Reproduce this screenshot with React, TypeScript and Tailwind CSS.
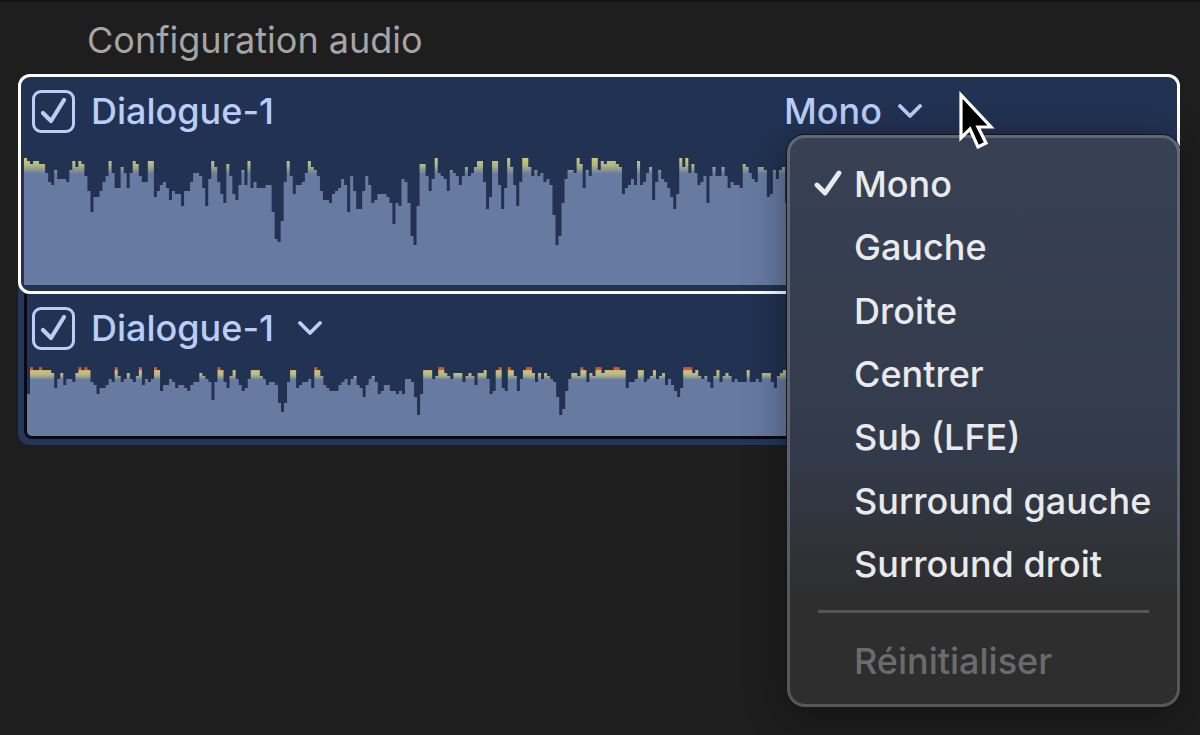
import { useId, useState } from 'react';

const STEP = 3;

// Distance of each column from the top of the lane, in steps of 3 units.
const MAIN_LEVELS = [
  0, 1, 2, 1, 1, 2, 2, 5, 8, 9, 4, 7, 7, 7, 8, 4, 1, 3, 1, 2, 6, 11, 18, 13,
  13, 11, 8, 6, 1, 5, 10, 10, 3, 5, 10, 5, 1, 2, 6, 8, 8, 1, 1, 13, 11, 9, 8,
  10, 14, 11, 12, 12, 16, 11, 11, 8, 5, 5, 6, 10, 16, 7, 1, 3, 8, 12, 15, 2, 6,
  12, 14, 9, 4, 9, 1, 10, 8, 10, 10, 10, 9, 9, 18, 27, 28, 21, 8, 1, 6, 12, 9,
  9, 8, 5, 1, 3, 4, 6, 11, 14, 14, 15, 12, 11, 10, 7, 9, 18, 6, 11, 17, 17, 11,
  6, 9, 15, 14, 12, 12, 12, 13, 15, 22, 15, 16, 7, 8, 15, 26, 29, 16, 2, 2, 6,
  11, 7, 0, 5, 6, 7, 11, 4, 5, 6, 9, 6, 3, 6, 5, 3, 1, 1, 8, 17, 13, 1, 1, 9,
  17, 10, 0, 3, 9, 16, 8, 0, 0, 3, 6, 4, 6, 5, 8, 7, 9, 19, 29, 26, 15, 7, 4,
  4, 5, 0, 2, 10, 4, 6, 0, 0, 4, 1, 2, 1, 1, 1, 2, 3, 12, 10, 9, 7, 9, 1, 9, 8,
  5, 3, 14, 8, 4, 7, 8, 10, 13, 17, 12, 0, 3, 0, 5, 2, 5, 9, 8, 6, 15, 6, 3, 6,
  6, 3, 6, 10, 8, 9, 9, 10, 2, 3, 5, 7, 8, 3, 3, 4, 13, 12, 4, 7, 4, 3, 15,
];

const SUB_LEVELS = [
  9, 0, 1, 1, 0, 1, 1, 1, 2, 7, 4, 2, 6, 4, 4, 5, 2, 0, 1, 0, 1, 5, 6, 9, 7, 7,
  6, 4, 5, 0, 3, 5, 4, 2, 4, 5, 3, 0, 6, 4, 5, 4, 0, 1, 8, 6, 6, 4, 5, 7, 6, 6,
  7, 8, 6, 5, 5, 2, 3, 4, 5, 11, 5, 0, 1, 5, 7, 3, 1, 4, 6, 8, 7, 4, 1, 1, 1, 3,
  4, 6, 5, 5, 6, 12, 15, 12, 5, 1, 1, 7, 6, 5, 5, 4, 7, 0, 1, 3, 6, 7, 8, 8, 8,
  6, 5, 4, 6, 4, 3, 6, 7, 10, 6, 4, 3, 5, 9, 8, 6, 6, 8, 8, 9, 8, 9, 4, 4, 5,
  10, 16, 9, 1, 1, 1, 4, 3, 0, 0, 2, 3, 4, 2, 2, 2, 5, 3, 2, 3, 6, 2, 2, 1, 4,
  9, 8, 1, 0, 7, 8, 0, 1, 3, 8, 4, 1, 0, 0, 2, 5, 2, 4, 2, 3, 4, 5, 10, 16, 14,
  8, 4, 2, 2, 3, 0, 1, 5, 2, 3, 0, 0, 2, 1, 1, 1, 0, 0, 1, 1, 7, 5, 5, 4, 1, 1,
  5, 4, 3, 1, 4, 3, 2, 6, 4, 6, 8, 10, 7, 0, 0, 0, 2, 1, 3, 4, 3, 5, 7, 3, 1,
  5, 3, 2, 3, 5, 4, 5, 5, 5, 1, 5, 5, 4, 5, 2, 2, 2, 5, 7, 3, 2, 1, 2,
];

const CHANNELS = [
  'Mono',
  'Gauche',
  'Droite',
  'Centrer',
  'Sub (LFE)',
  'Surround gauche',
  'Surround droit',
];

type WaveformProps = {
  levels: number[];
  height: number;
  peaks?: boolean;
  className: string;
};

function Waveform({ levels, height, peaks = false, className }: WaveformProps) {
  const id = useId();
  const width = levels.length * STEP;
  const d = levels.map((level) => `V${level * STEP}h${STEP}`).join('');

  return (
    <svg
      viewBox={`0 0 ${width} ${height}`}
      preserveAspectRatio="none"
      className={className}
      aria-hidden="true"
    >
      <defs>
        <linearGradient id={id} gradientUnits="userSpaceOnUse" x1="0" y1="0" x2="0" y2="16">
          {peaks ? (
            <>
              <stop offset="0" stopColor="#d8402c" />
              <stop offset="0.16" stopColor="#d8603c" />
              <stop offset="0.24" stopColor="#c8c57c" />
              <stop offset="0.5" stopColor="#b3b684" />
              <stop offset="0.8" stopColor="#667aa2" />
            </>
          ) : (
            <>
              <stop offset="0" stopColor="#cdca6c" />
              <stop offset="0.45" stopColor="#b3b680" />
              <stop offset="1" stopColor="#667aa2" />
            </>
          )}
        </linearGradient>
      </defs>
      <path d={`M0 ${height}${d}V${height}z`} fill={`url(#${id})`} />
    </svg>
  );
}

function Chevron() {
  return (
    <svg viewBox="0 0 24 16" className="h-4 w-6 shrink-0" fill="none" aria-hidden="true">
      <path
        d="M2 3l10 10L22 3"
        stroke="currentColor"
        strokeWidth="3.8"
        strokeLinecap="round"
        strokeLinejoin="round"
      />
    </svg>
  );
}

function TrackToggle({ id }: { id: string }) {
  const [on, setOn] = useState(true);

  return (
    <div className="flex items-center gap-4">
      <span className="relative grid size-[43px] place-items-center">
        <input
          id={id}
          type="checkbox"
          checked={on}
          onChange={() => setOn(!on)}
          className="absolute inset-0 appearance-none rounded-[9px] border-3 border-[#b9cdf8]"
        />
        {on && (
          <svg viewBox="0 0 26 26" className="pointer-events-none size-[26px]" fill="none" aria-hidden="true">
            <path
              d="M2 15l8 8L23 2"
              stroke="#b9cdf8"
              strokeWidth="4.2"
              strokeLinecap="round"
              strokeLinejoin="round"
            />
          </svg>
        )}
      </span>
      <label htmlFor={id}>Dialogue-1</label>
    </div>
  );
}

type ChannelMenuProps = {
  value: string;
  onSelect: (channel: string) => void;
};

function ChannelMenu({ value, onSelect }: ChannelMenuProps) {
  return (
    <div
      role="menu"
      className="absolute top-[46px] -right-[3px] left-[3px] z-10 rounded-[18px] border-3 border-white/20 bg-linear-to-b from-[#384154] from-0% via-[#333b4b] via-55% to-[#2e2e2f] to-80% bg-origin-border pt-[14px] pb-3 text-[#e9eaed] shadow-[0_0_0_1px_#14161b,0_8px_40px_rgba(0,0,0,0.4)]"
    >
      <div className="grid h-[444px] grid-rows-7">
        {CHANNELS.map((channel) => (
          <button
            key={channel}
            role="menuitemradio"
            aria-checked={channel === value}
            onClick={() => onSelect(channel)}
            className="flex items-center whitespace-nowrap pl-6 text-left"
          >
            <span className="w-10 shrink-0">
              {channel === value && (
                <svg viewBox="0 0 28 28" className="size-7" fill="none" aria-hidden="true">
                  <path
                    d="M3 15l8 8L25 3"
                    stroke="currentColor"
                    strokeWidth="4.8"
                    strokeLinecap="round"
                    strokeLinejoin="round"
                  />
                </svg>
              )}
            </span>
            {channel}
          </button>
        ))}
      </div>
      <hr className="mx-7 mt-[14px] border-t-3 border-[#555555]" />
      <button
        role="menuitem"
        disabled
        className="mt-4 flex h-[63px] items-center pl-16 text-[#6b6b6b]"
      >
        Réinitialiser
      </button>
    </div>
  );
}

function Pointer() {
  return (
    <svg
      viewBox="0 0 36 58"
      className="pointer-events-none absolute top-[2px] left-[175px] z-20 h-[58px] w-9"
      aria-hidden="true"
    >
      <path
        d="M2 4v43l9-9 8 18 8-4-8-16h13z"
        fill="#000"
        stroke="#fff"
        strokeWidth="3.2"
        strokeLinejoin="miter"
      />
    </svg>
  );
}

export default function App() {
  const [channel, setChannel] = useState('Mono');

  return (
    <main className="min-h-screen overflow-hidden border-t-2 border-[#121212] bg-[#1e1e1e] pr-5 pb-6 pl-[18px] font-['Inter',sans-serif] text-[36px] leading-[44px]">
      <h1 className="mt-4 pl-[69px] text-[#a5a5a5]">Configuration audio</h1>

      <div className="mt-3 rounded-[12px] bg-[#24365a] pb-[6px] font-medium text-[#b9cdf8]">
        <section className="rounded-[12px] border-3 border-white bg-[#213252] pb-[6px] pl-[3px]">
          <div className="flex h-[81px] items-start justify-between pt-3 pl-2">
            <TrackToggle id="main-track" />
            <div className="relative w-[393px]">
              <button aria-haspopup="menu" aria-expanded="true" className="flex items-center gap-4">
                {channel}
                <Chevron />
              </button>
              <ChannelMenu value={channel} onSelect={setChannel} />
              <Pointer />
            </div>
          </div>
          <Waveform levels={MAIN_LEVELS} height={127} className="block h-[127px] w-[764px]" />
        </section>

        <section className="ml-[6px] overflow-hidden rounded-b-[8px] border-3 border-t-0 border-[#060a14] bg-[#213252]">
          <div className="flex h-[73px] items-start gap-6 pt-3 pl-[5px]">
            <TrackToggle id="sub-track" />
            <button aria-label="Dialogue-1" className="flex h-[44px] items-center">
              <Chevron />
            </button>
          </div>
          <Waveform levels={SUB_LEVELS} height={69} peaks className="block h-[69px] w-[762px]" />
        </section>
      </div>
    </main>
  );
}
